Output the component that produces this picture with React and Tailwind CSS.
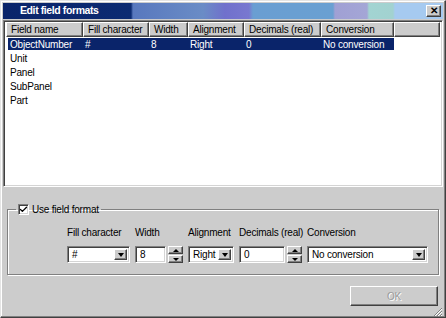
import { Check } from "lucide-react";

const COLS = [
  { label: "Field name", w: "w-[77px]" },
  { label: "Fill character", w: "w-[66px]" },
  { label: "Width", w: "w-[39px]" },
  { label: "Alignment", w: "w-[56px]" },
  { label: "Decimals (real)", w: "w-[77px]" },
  { label: "Conversion", w: "w-[73px]" },
];

const ROWS = [
  ["ObjectNumber", "#", "8", "Right", "0", "No conversion"],
  ["Unit"],
  ["Panel"],
  ["SubPanel"],
  ["Part"],
];

const raised =
  "border border-t-white border-l-white border-r-[#404040] border-b-[#404040] shadow-[inset_-1px_-1px_0_#808080]";
const sunken =
  "border border-t-[#808080] border-l-[#808080] border-r-white border-b-white shadow-[inset_1px_1px_0_#404040,inset_-1px_-1px_0_#d4d4d4]";

function DownArrow() {
  return <span className="h-0 w-0 border-x-[3.5px] border-t-[4px] border-x-transparent border-t-black" />;
}

function Combo({ value, w }) {
  return (
    <div className={`flex h-[17px] items-stretch bg-white p-[2px] ${sunken} ${w}`}>
      <span className="flex-1 overflow-hidden whitespace-nowrap pl-[2px] leading-[11px]">{value}</span>
      <span className={`flex w-[13px] shrink-0 items-center justify-center bg-[#cccccc] ${raised}`}>
        <DownArrow />
      </span>
    </div>
  );
}

function Spin({ value, w }) {
  return (
    <div className="flex items-stretch gap-[2px]">
      <div className={`flex h-[17px] items-center bg-white pl-[4px] ${sunken} ${w}`}>{value}</div>
      <div className="flex w-[15px] flex-col">
        <span className={`flex h-[8px] items-center justify-center bg-[#cccccc] ${raised}`}>
          <span className="h-0 w-0 border-x-[3px] border-b-[3px] border-x-transparent border-b-black" />
        </span>
        <span className={`mt-[1px] flex h-[8px] items-center justify-center bg-[#cccccc] ${raised}`}>
          <span className="h-0 w-0 border-x-[3px] border-t-[3px] border-x-transparent border-t-black" />
        </span>
      </div>
    </div>
  );
}

function Field({ label, w, children }) {
  return (
    <div className={`flex shrink-0 flex-col gap-[7px] whitespace-nowrap ${w}`}>
      <span className="h-[12px] leading-[12px]">{label}</span>
      {children}
    </div>
  );
}

export default function App() {
  return (
    <div className="flex h-[318px] w-[446px] flex-col border border-t-[#e4e4e4] border-l-[#e4e4e4] border-r-[#404040] border-b-[#404040] bg-[#cccccc] p-[2px] font-['Liberation_Sans',Arial,sans-serif] text-[10px] tracking-[-0.2px] text-black shadow-[inset_-1px_-1px_0_#808080,inset_1px_1px_0_#ffffff]">
      <div className="flex h-[16px] shrink-0 items-center bg-[linear-gradient(90deg,#0a246a_0px,#0c2b72_128px,#5878be_130px,#6a8cc6_200px,#7070cc_222px,#7878d0_246px,#6a9ed2_250px,#6aa0d2_330px,#a0a0d4_332px,#a4a6d6_364px,#a2d4d2_366px,#a2d2d0_390px,#a6caf0_392px)] pl-[17px] pr-[2px]">
        <span className="flex-1 text-[10.5px] font-bold tracking-[-0.4px] text-white">Edit field formats</span>
        <span className={`flex h-[12px] w-[15px] items-center justify-center bg-[#cccccc] text-[10px] font-bold leading-none ${raised}`}>
          ✕
        </span>
      </div>

      <div className={`mt-[1px] flex h-[167px] shrink-0 flex-col bg-white px-[2px] pt-[1px] ${sunken}`}>
        <div className="flex h-[15px] shrink-0">
          {COLS.map((c) => (
            <div key={c.label} className={`flex items-center bg-[#cccccc] pl-[4px] ${raised} ${c.w}`}>
              {c.label}
            </div>
          ))}
          <div className={`flex-1 bg-[#cccccc] ${raised}`} />
        </div>
        <div className="flex flex-col">
          {ROWS.map((r, i) => (
            <div key={r[0]} className="flex h-[14px] items-center">
              <div className={`ml-[2px] flex h-[12px] items-center ${i === 0 ? "bg-[#0a246a] text-white" : ""}`}>
                {COLS.map((c, j) => (
                  <span key={c.label} className={`pl-[2px] ${j === 0 ? "w-[75px]" : c.w}`}>
                    {r[j] || ""}
                  </span>
                ))}
              </div>
            </div>
          ))}
        </div>
      </div>

      <fieldset className="mx-[4px] mt-[15px] h-[73px] shrink-0 border border-[#808080] px-[8px] shadow-[1px_1px_0_#ffffff,inset_1px_1px_0_#ffffff]">
        <legend className="flex items-center gap-[3px] px-[2px]">
          <span className={`flex h-[11px] w-[11px] items-center justify-center bg-white ${sunken}`}>
            <Check size={9} strokeWidth={3.5} className="text-black" />
          </span>
          <span>Use field format</span>
        </legend>
        <div className="mt-[10px] flex gap-[5px] pl-[51px]">
          <Field label="Fill character" w="w-[63px]">
            <Combo value="#" w="w-[63px]" />
          </Field>
          <Field label="Width" w="w-[48px]">
            <Spin value="8" w="w-[31px]" />
          </Field>
          <Field label="Alignment" w="w-[46px]">
            <Combo value="Right" w="w-[46px]" />
          </Field>
          <Field label="Decimals (real)" w="w-[63px]">
            <Spin value="0" w="w-[46px]" />
          </Field>
          <Field label="Conversion" w="w-[121px]">
            <Combo value="No conversion" w="w-[121px]" />
          </Field>
        </div>
      </fieldset>

      <div className="mt-[11px] flex shrink-0 justify-end pr-[5px]">
        <div className={`flex h-[20px] w-[88px] items-center justify-center bg-[#cccccc] text-[#9a9a9a] [text-shadow:1px_1px_0_#ffffff] ${raised}`}>
          OK
        </div>
      </div>

      <div className="mt-auto flex justify-end">
        <svg width="11" height="11" viewBox="0 0 11 11">
          <path d="M10 2 L2 10 M10 5 L5 10 M10 8 L8 10" stroke="#808080" strokeWidth="1" />
          <path d="M10 3 L3 10 M10 6 L6 10 M10 9 L9 10" stroke="#ffffff" strokeWidth="1" />
        </svg>
      </div>
    </div>
  );
}
